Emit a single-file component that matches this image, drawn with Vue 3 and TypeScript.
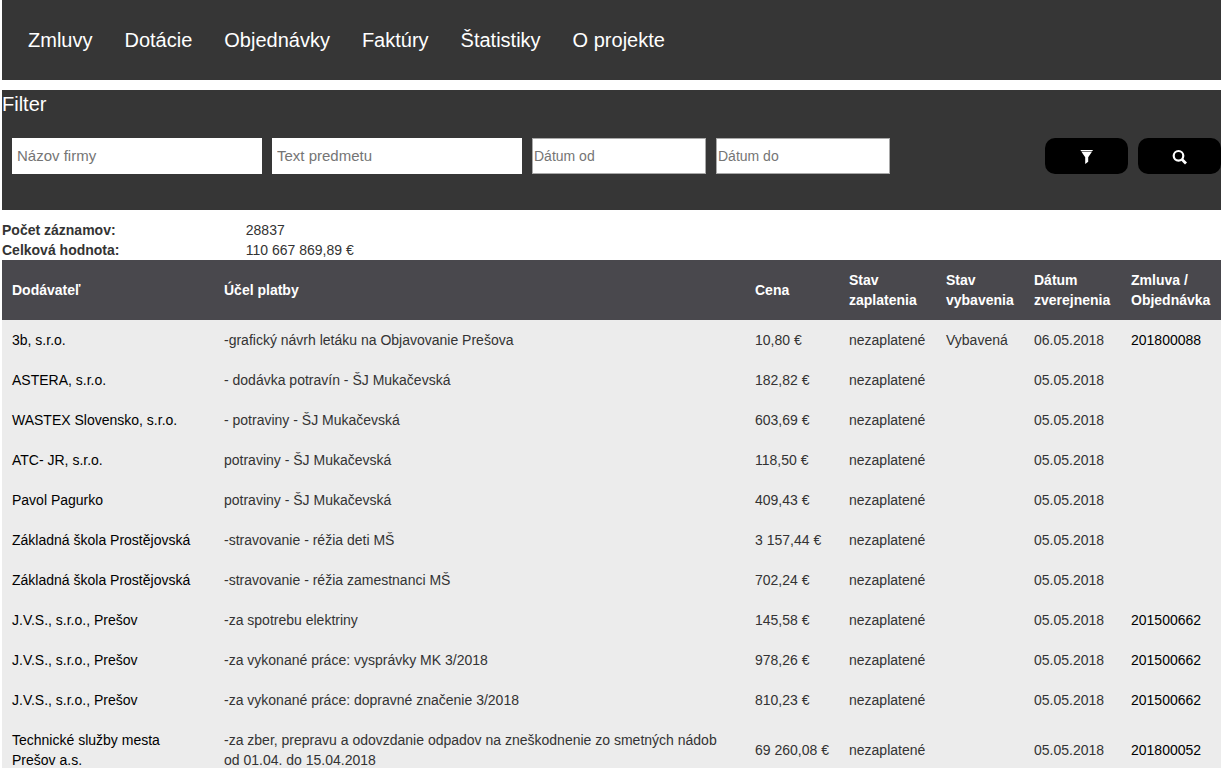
<script setup lang="ts">
import { ref } from 'vue'

interface Invoice {
  supplier: string
  purpose: string
  price: string
  handled?: string
  date: string
  contract?: string
}

const navItems: string[] = ['Zmluvy', 'Dotácie', 'Objednávky', 'Faktúry', 'Štatistiky', 'O projekte']

const company = ref('')
const subject = ref('')
const dateFrom = ref('')
const dateTo = ref('')

const invoices: Invoice[] = [
  { supplier: '3b, s.r.o.', purpose: '-grafický návrh letáku na Objavovanie Prešova', price: '10,80 €', handled: 'Vybavená', date: '06.05.2018', contract: '201800088' },
  { supplier: 'ASTERA, s.r.o.', purpose: '- dodávka potravín - ŠJ Mukačevská', price: '182,82 €', date: '05.05.2018' },
  { supplier: 'WASTEX Slovensko, s.r.o.', purpose: '- potraviny - ŠJ Mukačevská', price: '603,69 €', date: '05.05.2018' },
  { supplier: 'ATC- JR, s.r.o.', purpose: 'potraviny - ŠJ Mukačevská', price: '118,50 €', date: '05.05.2018' },
  { supplier: 'Pavol Pagurko', purpose: 'potraviny - ŠJ Mukačevská', price: '409,43 €', date: '05.05.2018' },
  { supplier: 'Základná škola Prostějovská', purpose: '-stravovanie - réžia deti MŠ', price: '3 157,44 €', date: '05.05.2018' },
  { supplier: 'Základná škola Prostějovská', purpose: '-stravovanie - réžia zamestnanci MŠ', price: '702,24 €', date: '05.05.2018' },
  { supplier: 'J.V.S., s.r.o., Prešov', purpose: '-za spotrebu elektriny', price: '145,58 €', date: '05.05.2018', contract: '201500662' },
  { supplier: 'J.V.S., s.r.o., Prešov', purpose: '-za vykonané práce: vysprávky MK 3/2018', price: '978,26 €', date: '05.05.2018', contract: '201500662' },
  { supplier: 'J.V.S., s.r.o., Prešov', purpose: '-za vykonané práce: dopravné značenie 3/2018', price: '810,23 €', date: '05.05.2018', contract: '201500662' },
  { supplier: 'Technické služby mesta Prešov a.s.', purpose: '-za zber, prepravu a odovzdanie odpadov na zneškodnenie zo smetných nádob od 01.04. do 15.04.2018', price: '69 260,08 €', date: '05.05.2018', contract: '201800052' },
]
</script>

<template>
  <div class="page">
    <nav class="menu">
      <a v-for="item in navItems" :key="item" href="#">{{ item }}</a>
    </nav>

    <form class="filter" @submit.prevent>
      <h2>Filter</h2>
      <div class="fields">
        <input v-model="company" class="text" type="text" placeholder="Názov firmy" aria-label="Názov firmy">
        <input v-model="subject" class="text" type="text" placeholder="Text predmetu" aria-label="Text predmetu">
        <input v-model="dateFrom" class="date" type="text" placeholder="Dátum od" aria-label="Dátum od">
        <input v-model="dateTo" class="date" type="text" placeholder="Dátum do" aria-label="Dátum do">
        <div class="actions">
          <button type="button" aria-label="Filter">
            <svg width="15" height="16" viewBox="0 0 15 16" aria-hidden="true">
              <path d="M1.700 1h12v1h-12z" fill="#fff" />
              <path d="M2 2h11.400l-.8 1H2.800z" fill="#777" />
              <path d="M2.600 3h10.200L9.200 8.200v4.600L6.200 15V8.200z" fill="#fff" />
            </svg>
          </button>
          <button type="submit" aria-label="Hľadať">
            <svg width="15" height="16" viewBox="0 0 15 16" aria-hidden="true">
              <circle cx="6.500" cy="6.800" r="4.800" fill="none" stroke="#fff" stroke-width="2.200" />
              <path d="M9.800 10.200l4.200 4.200" stroke="#fff" stroke-width="2.800" />
            </svg>
          </button>
        </div>
      </div>
    </form>

    <dl class="summary">
      <dt>Počet záznamov:</dt>
      <dd>28837</dd>
      <dt>Celková hodnota:</dt>
      <dd>110 667 869,89 €</dd>
    </dl>

    <table>
      <colgroup>
        <col class="c-supplier">
        <col>
        <col class="c-price">
        <col class="c-paid">
        <col class="c-handled">
        <col class="c-date">
        <col class="c-contract">
      </colgroup>
      <thead>
        <tr>
          <th scope="col">Dodávateľ</th>
          <th scope="col">Účel platby</th>
          <th scope="col">Cena</th>
          <th scope="col">Stav zaplatenia</th>
          <th scope="col">Stav vybavenia</th>
          <th scope="col">Dátum zverejnenia</th>
          <th scope="col">Zmluva / Objednávka</th>
        </tr>
      </thead>
      <tbody>
        <tr v-for="(row, i) in invoices" :key="i">
          <td><a href="#">{{ row.supplier }}</a></td>
          <td>{{ row.purpose }}</td>
          <td class="nowrap">{{ row.price }}</td>
          <td>nezaplatené</td>
          <td>{{ row.handled }}</td>
          <td>{{ row.date }}</td>
          <td><a v-if="row.contract" href="#">{{ row.contract }}</a></td>
        </tr>
      </tbody>
    </table>
  </div>
</template>

<style>
body {
  margin: 0;
  background: #fff;
}
</style>

<style scoped>
.page {
  padding-left: 2px;
  font-family: "Liberation Sans", Arial, sans-serif;
  font-size: 14px;
  line-height: 20px;
  color: #333;
}

.page *,
.page {
  box-sizing: border-box;
}

.menu {
  display: flex;
  flex-wrap: wrap;
  gap: 0 32px;
  padding: 26px;
  background: #363636;
  font-size: 20px;
  line-height: 28px;
}

.menu a {
  color: #fff;
  text-decoration: none;
}

.filter {
  margin-top: 10px;
  padding-bottom: 36px;
  background: #363636;
}

.filter h2 {
  margin: 0 0 20px;
  color: #fff;
  font-size: 20px;
  font-weight: 400;
  line-height: 28px;
}

.fields {
  display: flex;
  gap: 10px;
  padding-left: 10px;
}

.fields input {
  height: 36px;
  margin: 0;
  border-radius: 0;
  background: #fff;
  color: #333;
  font-family: inherit;
}

.fields input::placeholder {
  color: #757575;
}

.fields .text {
  width: 250px;
  padding: 0 5px 1px;
  border: 0;
  font-size: 15px;
}

.fields .date {
  width: 174px;
  padding: 1px;
  border: 1px solid #a9a9a9;
  font-size: 14px;
}

.actions {
  display: flex;
  gap: 10px;
  margin-left: auto;
}

.actions button {
  display: flex;
  align-items: center;
  justify-content: center;
  width: 83px;
  height: 36px;
  padding: 2px 0 0;
  border: 0;
  border-radius: 10px;
  background: #000;
  cursor: pointer;
}

.summary {
  display: grid;
  grid-template-columns: 20% 1fr;
  margin: 10px 0 0;
}

.summary dt {
  font-weight: 700;
}

.summary dd {
  margin: 0;
}

table {
  width: 100%;
  border-collapse: collapse;
  table-layout: fixed;
  background: #ececec;
}

.c-supplier {
  width: 212px;
}

.c-price {
  width: 94px;
}

.c-paid,
.c-date {
  width: 97px;
}

.c-handled {
  width: 88px;
}

.c-contract {
  width: 100px;
}

th,
td {
  padding: 10px;
  text-align: left;
  vertical-align: middle;
}

th {
  background: #49484d;
  color: #fff;
  font-weight: 700;
}

td a {
  color: #000;
  text-decoration: none;
}

.nowrap {
  white-space: nowrap;
}
</style>
